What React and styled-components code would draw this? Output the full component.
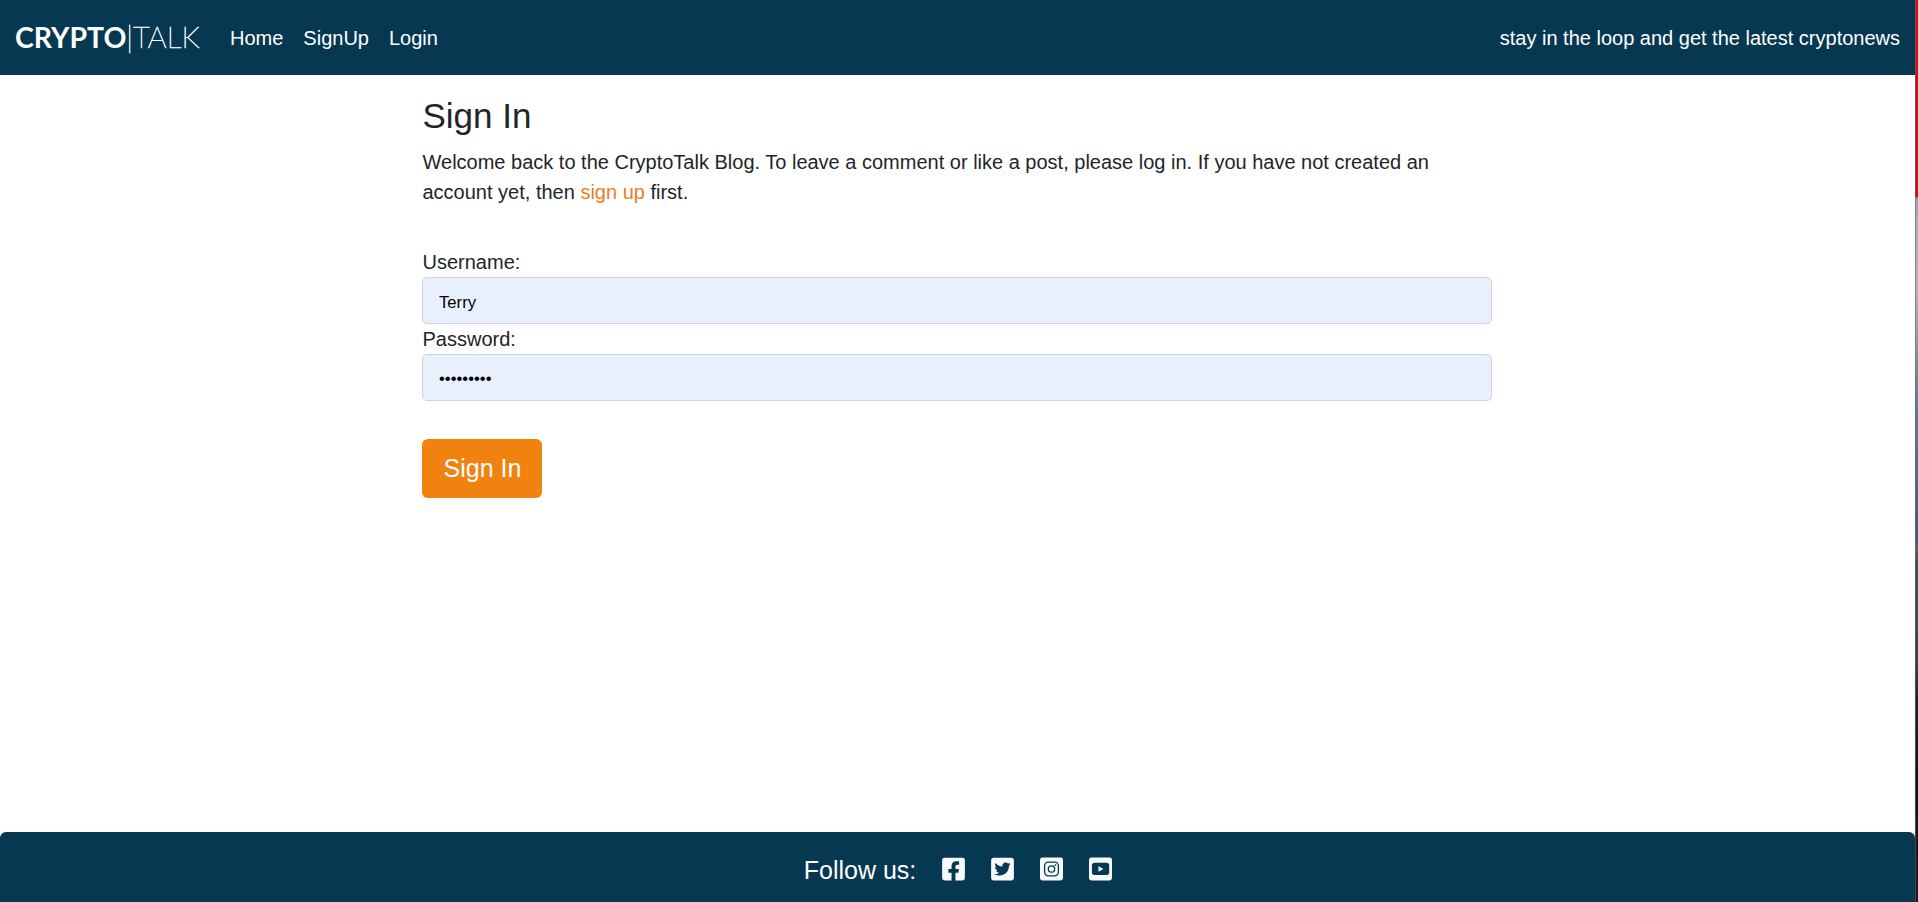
import React from 'react';
import styled, { createGlobalStyle } from 'styled-components';
import { FaFacebookSquare, FaTwitterSquare } from 'react-icons/fa';

const GlobalStyle = createGlobalStyle`
  *, *::before, *::after { box-sizing: border-box; }
  body {
    margin: 0;
    background: #fff;
    color: #212529;
    font: 400 20px/1.5 "Liberation Sans", Arial, sans-serif;
    overflow: hidden;
  }
`;

const Shell = styled.div`
  display: flex;
  height: 902px;
`;

const Page = styled.div`
  flex: 1;
  display: flex;
  flex-direction: column;
`;

const Edge = styled.div`
  flex: none;
  width: 3px;
  background: linear-gradient(
    #c8120c 0, #c8120c 197px, #94a0b2 198px, #a9adb8 220px, #b3b1b4 290px,
    #8798a9 345px, #607d93 400px, #4c6a83 480px, #3f5b75 535px, #5a5c68 550px,
    #374e5c 565px, #34495a 620px, #33424c 660px, #1c2527 700px, #101514 780px, #1c1c18 902px
  );
  border-left: 1px solid rgba(100, 110, 125, 0.55);
`;

const Navbar = styled.nav`
  display: flex;
  align-items: center;
  flex: none;
  height: 75px;
  padding: 0 15px;
  background: #063851;
  color: #fff;
`;

const Brand = styled.a`
  flex: none;
  width: 215px;
  padding-bottom: 1px;
  font: 100 29.5px/1.5 Lato, sans-serif;
  -webkit-text-stroke: 0.7px #fff;
  white-space: nowrap;
`;

const BrandStrong = styled.span`
  font-size: 28.4px;
  font-weight: 700;
  -webkit-text-stroke: 0;
`;

const NavLinks = styled.div`
  display: flex;
  flex: 1;
  gap: 20px;
`;

const NavLink = styled.a`
  color: #fff;
`;

const Tagline = styled.span`
  white-space: nowrap;
`;

const Main = styled.main`
  flex: 1;
  width: 1071px;
  margin: 0 auto;
  padding-top: 20px;
`;

const Title = styled.h1`
  margin: 0 0 10px;
  padding-left: 0.5px;
  font-size: 35px;
  font-weight: 400;
  line-height: 42px;
`;

const Intro = styled.p`
  margin: 0 0 40px;
  padding-left: 0.5px;
`;

const SignUpLink = styled.a`
  color: #f07c22;
`;

const Label = styled.label`
  display: block;
  padding-left: 0.5px;
`;

const Field = styled.input`
  display: block;
  width: 1070px;
  height: 47px;
  padding: ${(p) => (p.type === 'password' ? '3px' : '4px')} 16px 0;
  border: 1px solid #ced4da;
  border-radius: 5px;
  outline: none;
  background: #e8effd;
  color: #000;
  font: 16.667px "Liberation Sans", Arial, sans-serif;
`;

const SubmitButton = styled.button`
  display: block;
  width: 120px;
  height: 59px;
  margin-top: 38px;
  padding: 0 0 0 1px;
  border: 0;
  border-radius: 6px;
  background: #f1820f;
  color: #fff;
  font: 25px/1.5 "Liberation Sans", Arial, sans-serif;
`;

const Footer = styled.footer`
  display: flex;
  align-items: center;
  justify-content: center;
  flex: none;
  height: 70px;
  padding: 7px 0 0 1px;
  border-radius: 6px 6px 0 0;
  background: #063851;
  color: #fff;
  font-size: 25px;
`;

const SocialLinks = styled.div`
  display: flex;
  gap: 26px;
  margin: 0 0 3px 26px;
  color: #f8f9fa;
`;

const SocialLink = styled.a`
  display: flex;
  width: 23px;
  svg { display: block; width: 23px; height: 26px; }
`;

const InstagramSquare = () => (
  <svg viewBox="0 0 23 26">
    <rect y="1.5" width="23" height="23" rx="2.4" fill="currentColor" />
    <g fill="none" stroke="#063851">
      <rect x="4.6" y="6.1" width="13.8" height="13.8" rx="3.8" strokeWidth="1.3" />
      <circle cx="11.5" cy="13" r="3.2" strokeWidth="1.3" />
    </g>
    <circle cx="15.4" cy="9.1" r="0.9" fill="#063851" />
  </svg>
);

const YoutubeSquare = () => (
  <svg viewBox="0 0 23 26">
    <rect y="1.5" width="23" height="23" rx="2.4" fill="currentColor" />
    <rect x="2.9" y="6.8" width="17.3" height="12.3" rx="2.8" fill="#063851" />
    <path d="M9.5 10.2v5.6l4.9-2.8z" fill="currentColor" />
  </svg>
);

const socials = [FaFacebookSquare, FaTwitterSquare, InstagramSquare, YoutubeSquare];

export default function App() {
  return (
    <Shell>
      <GlobalStyle />
      <Page>
        <Navbar>
          <Brand><BrandStrong>CRYPTO</BrandStrong>|TALK</Brand>
          <NavLinks>
            <NavLink>Home</NavLink>
            <NavLink>SignUp</NavLink>
            <NavLink>Login</NavLink>
          </NavLinks>
          <Tagline>stay in the loop and get the latest cryptonews</Tagline>
        </Navbar>
        <Main>
          <Title>Sign In</Title>
          <Intro>
            Welcome back to the CryptoTalk Blog. To leave a comment or like a post, please log in. If you have not created an
            <br />
            account yet, then <SignUpLink>sign up</SignUpLink> first.
          </Intro>
          <Label htmlFor="username">Username:</Label>
          <Field id="username" type="text" defaultValue="Terry" />
          <Label htmlFor="password">Password:</Label>
          <Field id="password" type="password" defaultValue="password1" />
          <SubmitButton>Sign In</SubmitButton>
        </Main>
        <Footer>
          Follow us:
          <SocialLinks>
            {socials.map((Icon, i) => (
              <SocialLink key={i}><Icon /></SocialLink>
            ))}
          </SocialLinks>
        </Footer>
      </Page>
      <Edge />
    </Shell>
  );
}
